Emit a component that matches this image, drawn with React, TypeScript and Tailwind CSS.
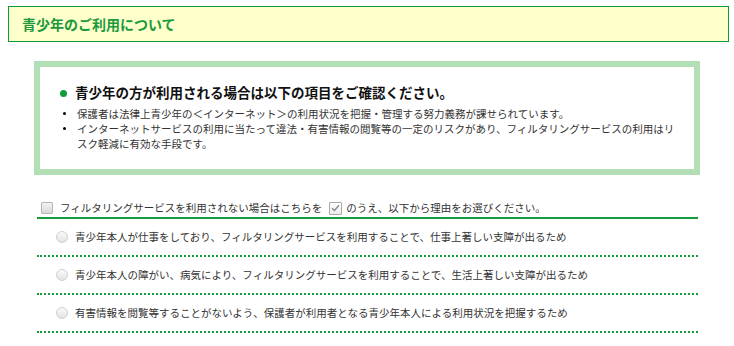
export default function App() {
  const reasons = [
    '青少年本人が仕事をしており、フィルタリングサービスを利用することで、仕事上著しい支障が出るため',
    '青少年本人の障がい、病気により、フィルタリングサービスを利用することで、生活上著しい支障が出るため',
    '有害情報を閲覧等することがないよう、保護者が利用者となる青少年本人による利用状況を把握するため',
  ];

  return (
    <div className="w-[734px] h-[346px] overflow-hidden bg-white font-['Noto_Sans_CJK_JP',sans-serif] text-[#333]">
      {/* Title bar */}
      <div className="mt-[6px] ml-2 w-[721px] h-[36px] border border-[#0d9d3d] bg-[#ffffcc] flex items-center pl-[13px]">
        <h1 className="text-[14px] font-bold text-[#1b9a3c] leading-none">青少年のご利用について</h1>
      </div>

      {/* Notice box */}
      <div className="mt-[19px] ml-[34px] w-[666px] h-[114px] border-[6px] border-[#b2dfb5] bg-white pt-[15px] pl-[20px] pr-[16px]">
        <div className="flex items-center h-[22px]">
          <span className="w-[7px] h-[7px] rounded-full bg-[#0d9d3d]"></span>
          <span className="ml-[8px] text-[13.5px] font-bold text-[#111] leading-none">
            青少年の方が利用される場合は以下の項目をご確認ください。
          </span>
        </div>
        <ul className="mt-[2px] text-[10.5px] leading-[15px] text-[#333]">
          <li className="flex">
            <span className="w-[3px] h-[3px] rounded-full bg-black mt-[6px] ml-[3px] shrink-0"></span>
            <span className="ml-[11px]">保護者は法律上青少年の＜インターネット＞の利用状況を把握・管理する努力義務が課せられています。</span>
          </li>
          <li className="flex">
            <span className="w-[3px] h-[3px] rounded-full bg-black mt-[6px] ml-[3px] shrink-0"></span>
            <span className="ml-[11px]">
              インターネットサービスの利用に当たって違法・有害情報の閲覧等の一定のリスクがあり、フィルタリングサービスの利用はリスク軽減に有効な手段です。
            </span>
          </li>
        </ul>
      </div>

      {/* Checkbox row */}
      <div className="mt-[25px] mb-[1px] ml-[41px] h-[16px] flex items-center text-[10.5px] text-[#333]">
        <span className="w-[12px] h-[12px] border border-[#b5b5b5] bg-gradient-to-b from-[#f2f2f2] to-[#d9d9d9] rounded-[1px]"></span>
        <span className="ml-[7px]">フィルタリングサービスを利用されない場合はこちらを</span>
        <span className="ml-[7px] w-[13px] h-[13px] border border-[#a9a9a9] bg-gradient-to-b from-white to-[#ececec] rounded-[1px] flex items-center justify-center">
          <svg width="9" height="8" viewBox="0 0 9 8">
            <path d="M1 4.2 L3.4 6.5 L8 1.2" fill="none" stroke="#8a8a8a" strokeWidth="1.4" />
          </svg>
        </span>
        <span className="ml-[4px]">のうえ、以下から理由をお選びください。</span>
      </div>

      {/* Reasons */}
      <div className="ml-[37px] w-[661px] border-t-2 border-[#129c3e]">
        {reasons.map((r) => (
          <div key={r} className="h-[38px] flex items-center pl-[19px] border-b-2 border-dotted border-[#129c3e] text-[10.5px] text-[#333]">
            <span className="w-[12px] h-[12px] rounded-full border border-[#d0d0d0] bg-gradient-to-b from-[#fafafa] to-[#e3e3e3] shrink-0"></span>
            <span className="ml-[7px]">{r}</span>
          </div>
        ))}
      </div>
    </div>
  );
}
